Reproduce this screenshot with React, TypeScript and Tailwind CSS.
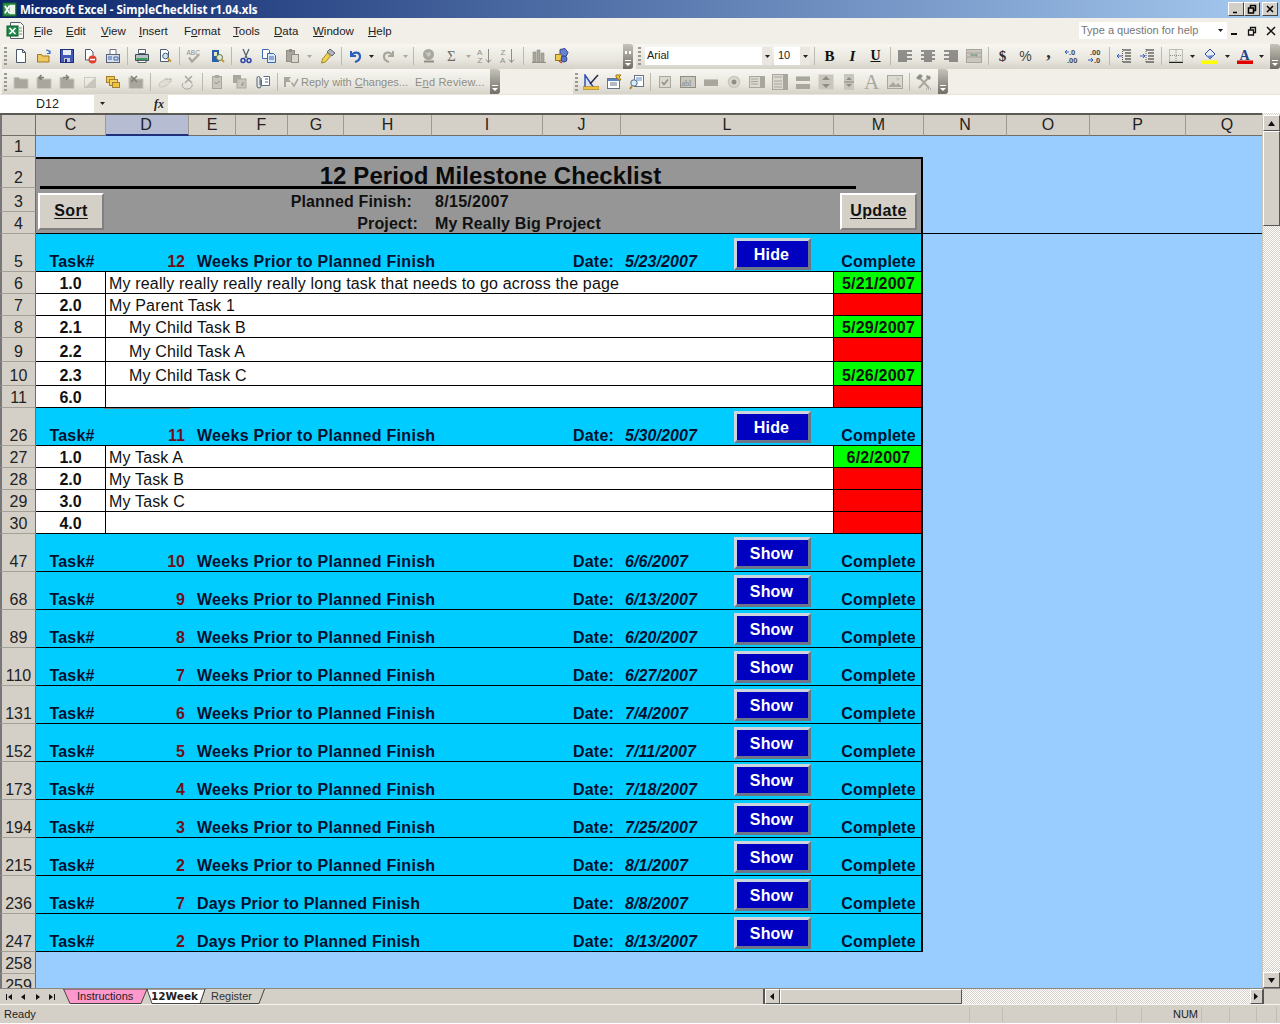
import React from 'react';

const ui = "font-['Liberation_Sans',sans-serif]";

const S = ({ children }: { children: React.ReactNode }) => (
  <svg width="16" height="16" viewBox="0 0 16 16" fill="none">{children}</svg>
);

const G = '#a9a79d';
const GD = '#8f8d84';
const GL = '#c9c7bd';

const icons: Record<string, React.ReactNode> = {
  new: <S><path d="M3.500 1.500h6l3 3v10h-9z" fill="#fff" stroke="#4a5870" /><path d="M9.500 1.500v3h3" stroke="#4a5870" /></S>,
  open: <S><path d="M1.500 6.500h4l1 1.500h6.500v6h-11.500z" fill="#f0c860" stroke="#a07820" /><path d="M10 2c2 0 3.500 1 4 3M14 2.500v3h-3" stroke="#3f6fc4" strokeWidth="1.200" /></S>,
  save: <S><rect x="1.500" y="1.500" width="13" height="13" fill="#4058b8" stroke="#1c2c78" /><rect x="4" y="2" width="8" height="5" fill="#e8ecf8" /><rect x="5" y="10" width="6" height="4" fill="#c8ccd8" /><rect x="6" y="11" width="2" height="3" fill="#1c2c78" /></S>,
  perm: <S><path d="M3.500 1.500h5l2.500 2.500v8h-7.500z" fill="#fff" stroke="#4a5870" /><circle cx="10.500" cy="11.500" r="4" fill="#e04030" /><rect x="8" y="10.800" width="5" height="1.500" fill="#fff" /></S>,
  mail: <S><path d="M5 1.500h6v5h-6z" fill="#fff" stroke="#6a7484" /><rect x="1.500" y="6.500" width="13" height="8" fill="#d8dce4" stroke="#56627a" /><path d="M3 9h4M3 11h4M9 9h4v3h-4z" stroke="#3a6ab0" /></S>,
  print: <S><path d="M4.500 1.500h7v4h-7z" fill="#fff" stroke="#55606e" /><path d="M1.500 6.500h13v6h-13z" fill="#b8c0c8" stroke="#3e4a56" /><rect x="2.500" y="10" width="11" height="2" fill="#3aa060" /><path d="M4 12.500h8v2h-8z" fill="#fff" stroke="#55606e" /></S>,
  preview: <S><path d="M3.500 1.500h6l2 2v10h-8z" fill="#fff" stroke="#4a5870" /><circle cx="8.500" cy="8" r="2.800" fill="#cfe4f4" stroke="#40607a" /><path d="M10.500 10l3.500 3.500" stroke="#c89838" strokeWidth="2" /></S>,
  spell: <S><text x="0.500" y="6.500" fontSize="6.500" fontFamily="Liberation Sans" fill={GD}>ABC</text><path d="M3 9.500l3 4 7-7" stroke={G} strokeWidth="2.200" /></S>,
  research: <S><rect x="3" y="2" width="7" height="12" fill="#2a60a8" /><rect x="5" y="4" width="3" height="4" fill="#e4e8c0" /><circle cx="10.500" cy="9.500" r="3" fill="#e0e8d8" stroke="#607040" /><path d="M12.500 11.500l2.500 2.500" stroke="#c89838" strokeWidth="2" /></S>,
  cut: <S><path d="M5 1l4 9M11 1l-4 9" stroke="#5a6270" strokeWidth="1.300" /><circle cx="5" cy="12.500" r="2" stroke="#2a44a8" strokeWidth="1.500" /><circle cx="11" cy="12.500" r="2" stroke="#2a44a8" strokeWidth="1.500" /></S>,
  copy: <S><path d="M1.500 1.500h6l1 1v8h-7z" fill="#fff" stroke="#3a68b0" /><path d="M6.500 5.500h6l2 2v7h-8z" fill="#dbe8f8" stroke="#3a68b0" /><path d="M8 9h5M8 11h5" stroke="#3a68b0" /></S>,
  paste: <S><rect x="2.500" y="2.500" width="8" height="11" fill={G} stroke={GD} /><rect x="5" y="1" width="3" height="3" fill={GD} /><rect x="7.500" y="6.500" width="7" height="8" fill="#d8d6cc" stroke={GD} /></S>,
  painter: <S><path d="M10 1l5 4-3 3-5-4z" fill="#b0b4c0" stroke="#5c6472" /><path d="M7.500 5l3 3-5 6-4 1 1-4z" fill="#f0d050" stroke="#a08828" /></S>,
  undo: <S><path d="M4 3v5h5" stroke="#2a5fc0" strokeWidth="2" /><path d="M4.500 7.500C7 3 13 4 13 8.500c0 2.500-2 4.500-5 5.500" stroke="#2a5fc0" strokeWidth="2.200" /></S>,
  redo: <S><path d="M12 3v5H7" stroke={G} strokeWidth="2" /><path d="M11.500 7.500C9 3 3 4 3 8.500c0 2.500 2 4.500 5 5.500" stroke={G} strokeWidth="2.200" /></S>,
  link: <S><circle cx="7.500" cy="6.500" r="5.500" fill={G} /><path d="M4 4l3 1 2-2 1 4-3 2z" fill={GL} /><path d="M3 13.500h10" stroke={GD} strokeWidth="2" /></S>,
  sigma: <S><text x="3" y="13" fontSize="15" fontFamily="Liberation Serif" fill="#6e6c66">Σ</text></S>,
  az: <S><text x="0" y="7" fontSize="8" fontFamily="Liberation Sans" fill={GD}>A</text><text x="0.500" y="15" fontSize="8" fontFamily="Liberation Sans" fill={GD}>Z</text><path d="M11.500 1v13M9 11.500l2.500 3 2.500-3" stroke={GD} /></S>,
  za: <S><text x="0.500" y="7" fontSize="8" fontFamily="Liberation Sans" fill={GD}>Z</text><text x="0" y="15" fontSize="8" fontFamily="Liberation Sans" fill={GD}>A</text><path d="M11.500 1v13M9 11.500l2.500 3 2.500-3" stroke={GD} /></S>,
  chart: <S><path d="M2 4h3v10H2zM6 2h3v12H6zM10 5h3v9h-3z" fill={G} stroke={GD} strokeWidth="0.600" /><path d="M1 14.500h14" stroke={GD} /></S>,
  drawing: <S><path d="M6 1.500l5-1 3 4-2 4-6-1z" fill="#6a82d0" stroke="#33488c" /><rect x="1.500" y="6.500" width="6" height="6" fill="#f0c850" stroke="#987820" /><circle cx="10" cy="11" r="3" fill="#5a78c8" stroke="#33488c" /><path d="M5 13l3 2" stroke="#c04030" strokeWidth="1.500" /></S>,
  f1: <S><path d="M1 3.500h5l1 1.500h8v9.500H1z" fill={G} stroke={GL} /></S>,
  f2: <S><path d="M1 3.500h5l1 1.500h8v9.500H1z" fill={G} stroke={GL} /><path d="M8 3.500H3.500M5.500 1L3 3.500 5.500 6" stroke="#7f7d74" strokeWidth="1.500" /></S>,
  f3: <S><path d="M1 3.500h5l1 1.500h8v9.500H1z" fill={G} stroke={GL} /><path d="M4 3.500h5M7 1l2.500 2.500L7 6" stroke="#7f7d74" strokeWidth="1.500" /></S>,
  f4: <S><rect x="2.500" y="3.500" width="11" height="10" stroke={G} strokeDasharray="1 1" /><path d="M3 13l10-9v9z" fill={GL} /></S>,
  f5: <S><rect x="1.500" y="2.500" width="8" height="6" fill="#f0c850" stroke="#a08030" /><rect x="4.500" y="5.500" width="8" height="6" fill="#f4d060" stroke="#a08030" /><rect x="7.500" y="8.500" width="7" height="5" fill="#f0c040" stroke="#a08030" /></S>,
  f6: <S><path d="M1 3.500h5l1 1.500h8v9.500H1z" fill={G} stroke={GL} /><path d="M3 2l6 6M9 2L3 8" stroke="#7f7d74" strokeWidth="1.500" /></S>,
  f7: <S><path d="M2 11c0-3 6-6 9-6l3 0c0 3-4 8-9 8-2 0-3 0-3-2z" stroke={GL} fill="#e0ded4" /><path d="M8 5h6v3" stroke={G} strokeDasharray="1 1" /></S>,
  f8: <S><path d="M5 2l7 7M12 2L5 9" stroke={G} strokeWidth="1.500" /><path d="M3 9a5 4 0 1 0 9 1" stroke={G} /></S>,
  f9: <S><rect x="3.500" y="2.500" width="9" height="12" fill={GL} stroke={G} /><rect x="6" y="1" width="4" height="3" fill={G} /><path d="M5.500 8l2 2 3-3" stroke={GD} /></S>,
  f10: <S><rect x="1" y="1" width="8" height="8" fill={G} /><rect x="5" y="5" width="9" height="9" fill={GL} stroke={G} /><path d="M11 8v3l-2 0" stroke={GD} /></S>,
  clip: <S><path d="M8.500 2.500h6v9h-8V6" fill="#fff" stroke="#5c6c84" /><path d="M10 5h3M10 8h3" stroke="#3a68b0" /><path d="M6 4v8a2 2 0 0 1-4 0V4a1.500 1.500 0 0 1 3 0v7" stroke="#52627a" /></S>,
  flag: <S><path d="M1 3h7L6 5.500 8 8H3v5H1z" fill={G} /><path d="M8.500 8.500l2.500 3.500 4-7" stroke={G} strokeWidth="1.600" /></S>,
  design: <S><path d="M2 1v13h9z" fill="#dbe4f6" stroke="#2a48b0" strokeWidth="1.400" /><path d="M15 1L7 10" stroke="#2a2a50" strokeWidth="1.500" /><path d="M0 12.500h16v3H0z" fill="#f0c040" stroke="#a07810" strokeWidth="0.600" /></S>,
  props: <S><rect x="1.500" y="4.500" width="12" height="10" fill="#fff" stroke="#6a7484" /><rect x="2" y="5" width="11" height="2" fill="#5a84c8" /><path d="M4 9h7M4 11h7" stroke="#6a7484" /><path d="M10 1l5 0-2 2 2 3-2 0-3-3z" fill="#f0c840" stroke="#a07810" /></S>,
  code: <S><rect x="5.500" y="1.500" width="9" height="11" fill="#fff" stroke="#6a7484" /><path d="M7 4h6M7 6h6" stroke="#5a84c8" /><circle cx="5" cy="9" r="3.200" fill="#d8ecf8" stroke="#4a6a88" /><path d="M3 12l-2 3" stroke="#b08830" strokeWidth="2" /></S>,
  check: <S><rect x="2.500" y="2.500" width="11" height="11" fill="#dcdad0" stroke={G} /><path d="M5 8l2 2.500 4-5" stroke={GD} strokeWidth="1.500" /></S>,
  abl: <S><rect x="0.500" y="2.500" width="15" height="11" fill={GL} stroke={GD} /><text x="1.500" y="11.500" fontSize="8" fontFamily="Liberation Serif" fill="#86847b">abl</text></S>,
  rect: <S><rect x="1" y="5" width="14" height="7" fill={G} /><rect x="1" y="5" width="14" height="1" fill={GL} /></S>,
  radio: <S><circle cx="8" cy="8" r="5.500" fill="#dcdad0" stroke={GL} strokeWidth="1.500" /><circle cx="8" cy="8" r="2.500" fill={GD} /></S>,
  list: <S><rect x="0.500" y="2.500" width="15" height="11" fill="#dcdad0" stroke={G} /><path d="M2 5h7M2 7.500h7M2 10h7" stroke={G} /><rect x="11" y="3" width="4" height="10" fill={G} /></S>,
  combo: <S><rect x="0.500" y="0.500" width="15" height="15" fill="#dcdad0" stroke={G} /><path d="M2 3h8M2 7h8M2 10h8M2 13h8" stroke={G} /><rect x="11" y="1" width="4" height="14" fill={G} /></S>,
  scroll: <S><rect x="1" y="2" width="14" height="5" fill={G} /><rect x="1" y="10" width="14" height="5" fill={G} /><rect x="1" y="2" width="14" height="1" fill={GL} /></S>,
  spin: <S><rect x="0.500" y="0.500" width="15" height="15" fill={GL} /><path d="M4 6l4-4 4 4zM4 10l4 4 4-4z" fill={GD} /></S>,
  spin2: <S><rect x="3" y="0" width="10" height="16" fill={GL} /><path d="M5 6l3-3 3 3zM5 10l3 3 3-3z" fill={GD} /><rect x="3" y="7" width="10" height="2" fill={G} /></S>,
  bigA: <span className="font-['Liberation_Serif',serif] text-[21px] leading-[16px] text-[#a9a79d]">A</span>,
  img: <S><rect x="0.500" y="1.500" width="15" height="13" fill="#dcdad0" stroke={G} /><path d="M1 13l5-5 3 3 2-2 4 4z" fill={G} /><circle cx="11" cy="5" r="1.500" fill={GL} /></S>,
  tools: <S><path d="M2 2l11 12M14 2L3 14" stroke={G} strokeWidth="2" /><path d="M0 4l4-4 3 2-4 4zM11 1l4 3-2 2-3-3z" fill={GD} /><path d="M10 15h1M12 15h1M14 15h1" stroke={GD} /></S>,
  bold: <span className="font-['Liberation_Serif',serif] font-bold text-[15px] leading-4 text-[#111]">B</span>,
  italic: <span className="font-['Liberation_Serif',serif] italic font-bold text-[15px] leading-4 text-[#111]">I</span>,
  under: <span className="font-['Liberation_Serif',serif] font-bold underline text-[14px] leading-4 text-[#111]">U</span>,
  al: <S><path d="M1 3h14M1 5h9M1 7h14M1 9h9M1 11h14M1 13h9" stroke="#333" /></S>,
  ac: <S><path d="M1 3h14M4 5h8M1 7h14M4 9h8M1 11h14M4 13h8" stroke="#333" /></S>,
  ar: <S><path d="M1 3h14M6 5h9M1 7h14M6 9h9M1 11h14M6 13h9" stroke="#333" /></S>,
  merge: <S><rect x="0.500" y="1.500" width="15" height="13" fill={GL} stroke={G} /><path d="M0 5h16M5 5v4M11 5v4M0 9h16" stroke={G} /><path d="M5 7h6" stroke="#5a8a6a" /></S>,
  dollar: <span className="font-['Liberation_Serif',serif] font-bold text-[15px] leading-4 text-[#333]">$</span>,
  pct: <span className="font-['Liberation_Sans',sans-serif] text-[14px] leading-4 text-[#444]">%</span>,
  comma: <span className="font-['Liberation_Serif',serif] font-bold text-[18px] leading-3 text-[#333] pb-2">,</span>,
  inc: <S><text x="5" y="7" fontSize="7.500" fontWeight="bold" fontFamily="Liberation Sans" fill="#444">.0</text><text x="3" y="15" fontSize="7.500" fontWeight="bold" fontFamily="Liberation Sans" fill="#444">.00</text><path d="M5 4H1M3 2L1 4l2 2" stroke="#2a5fc0" /></S>,
  dec: <S><text x="3" y="7" fontSize="7.500" fontWeight="bold" fontFamily="Liberation Sans" fill="#444">.00</text><text x="7" y="15" fontSize="7.500" fontWeight="bold" fontFamily="Liberation Sans" fill="#444">.0</text><path d="M1 12h5M4 10l2 2-2 2" stroke="#2a5fc0" /></S>,
  outd: <S><path d="M7 2h8M9 5h6M9 8h6M9 11h6M7 14h8" stroke="#222" /><path d="M6 8H1M3 6L1 8l2 2" stroke="#2a5fc0" /><path d="M6.500 1v14" stroke="#555" strokeDasharray="1 1" /></S>,
  ind: <S><path d="M7 2h8M9 5h6M9 8h6M9 11h6M7 14h8" stroke="#222" /><path d="M1 8h5M4 6l2 2-2 2" stroke="#2a5fc0" /><path d="M7 1v14" stroke="#555" strokeDasharray="1 1" /></S>,
  borders: <S><rect x="1.500" y="1.500" width="13" height="12" stroke="#8a8a84" strokeDasharray="1 1" /><path d="M8 2v11M2 7.500h12" stroke="#8a8a84" strokeDasharray="1 1" /><path d="M1 14.500h14" stroke="#222" /></S>,
  fill: <S><path d="M8 1l5 5-5 5-5-5z" fill="#e8ecf4" stroke="#2c4a9a" /><path d="M4 8l4 3 4-4z" fill="#6a88d0" /><rect x="0" y="12.500" width="16" height="3.500" fill="#ffff00" /></S>,
  color: <S><text x="2.500" y="11.500" fontSize="14" fontWeight="bold" fontFamily="Liberation Serif" fill="#23408c">A</text><rect x="0" y="12.500" width="16" height="3.500" fill="#e00000" /></S>,
};

const Slot = ({ name }: { name: string }) => (
  <div className="w-[23px] h-[22px] shrink-0 flex items-center justify-center">{icons[name]}</div>
);

const Sep = ({ w }: { w: string }) => (
  <div className={`${w} shrink-0 flex justify-center`}>
    <div className="w-px h-[18px] bg-[#bcb9ae]" />
  </div>
);

const Arrow = ({ w, dim }: { w: string; dim?: boolean }) => (
  <div className={`${w} shrink-0 flex items-center justify-center`}>
    <svg width="5" height="3" viewBox="0 0 5 3"><path d="M0 0h5L2.500 3z" fill={dim ? '#a9a79d' : '#222'} /></svg>
  </div>
);

const Grip = () => (
  <div className="w-[3px] h-[18px] mx-[2px] shrink-0 bg-[repeating-linear-gradient(#9a988f_0_2px,transparent_2px_4px)]" />
);

const Chevron = ({ double }: { double?: boolean }) => (
  <div className="w-[10px] h-[25px] shrink-0 rounded-r-[3px] bg-[linear-gradient(#c6c4ba,#6f6d65)] flex flex-col items-center justify-end pb-[3px] gap-[3px]">
    {double && <span className="w-[6px] h-[3px] bg-[repeating-linear-gradient(90deg,#fff_0_2px,transparent_2px_4px)] mb-[3px]" />}
    <svg width="6" height="6" viewBox="0 0 6 6"><path d="M0 0h6v1H0zM0 3h6L3 6z" fill="#fff" /></svg>
  </div>
);

const Toolbar = ({ className, children }: { className: string; children: React.ReactNode }) => (
  <div className={`${className} h-[25px] flex items-center rounded-r-[3px] bg-[linear-gradient(#f7f6f1,#e9e7df_60%,#d6d4c9)] shrink-0`}>
    {children}
  </div>
);

const slots = (names: string[]) => names.map((n) => <Slot key={n} name={n} />);

const Dropdown = ({ w, text, pad }: { w: string; text: string; pad: string }) => (
  <div className={`${w} h-[18px] bg-white flex items-center shrink-0 ${pad} text-[11px] text-[#222]`}>
    <span className="flex-1 pb-[2px]">{text}</span>
    <div className="w-[10px] h-[18px] bg-[#e9e7df] flex items-center justify-center">
      <svg width="5" height="3" viewBox="0 0 5 3"><path d="M0 0h5L2.500 3z" fill="#222" /></svg>
    </div>
  </div>
);

const columns = [
  { l: 'C', w: 'w-[70px]' }, { l: 'D', w: 'w-[83px] pr-[2px]' }, { l: 'E', w: 'w-[47px]' }, { l: 'F', w: 'w-[52px]' },
  { l: 'G', w: 'w-[56px] pl-[1px]' }, { l: 'H', w: 'w-[88px]' }, { l: 'I', w: 'w-[111px]' }, { l: 'J', w: 'w-[78px]' },
  { l: 'L', w: 'w-[213px]' }, { l: 'M', w: 'w-[90px]' }, { l: 'N', w: 'w-[83px]' }, { l: 'O', w: 'w-[83px]' },
  { l: 'P', w: 'w-[96px]' }, { l: 'Q', w: 'w-[83px]' },
];

const RowNum = ({ n }: { n: number }) => (
  <div className="w-[36px] shrink-0 bg-[#d4d0c8] border-l-2 border-l-[#777] border-b border-b-[#a3a097] border-r border-r-[#6f6d66] flex justify-center items-end text-[16px] leading-[18px] text-[#222]">
    {n}
  </div>
);

const tasks1 = [
  { row: 6, h: 'h-[22px]', id: '1.0', text: 'My really really really really long task that needs to go across the page', indent: false, done: '5/21/2007' },
  { row: 7, h: 'h-[22px]', id: '2.0', text: 'My Parent Task 1', indent: false, done: '' },
  { row: 8, h: 'h-[22px]', id: '2.1', text: 'My Child Task B', indent: true, done: '5/29/2007' },
  { row: 9, h: 'h-[24px]', id: '2.2', text: 'My Child Task A', indent: true, done: '' },
  { row: 10, h: 'h-[24px]', id: '2.3', text: 'My Child Task C', indent: true, done: '5/26/2007' },
  { row: 11, h: 'h-[22px]', id: '6.0', text: '', indent: false, done: '' },
];

const tasks2 = [
  { row: 27, h: 'h-[22px]', id: '1.0', text: 'My Task A', indent: false, done: '6/2/2007' },
  { row: 28, h: 'h-[22px]', id: '2.0', text: 'My Task B', indent: false, done: '' },
  { row: 29, h: 'h-[22px]', id: '3.0', text: 'My Task C', indent: false, done: '' },
  { row: 30, h: 'h-[22px]', id: '4.0', text: '', indent: false, done: '' },
];

type Task = (typeof tasks1)[number];

const TaskRow = ({ t }: { t: Task }) => (
  <div className={`flex ${t.h}`}>
    <RowNum n={t.row} />
    <div className="w-[887px] shrink-0 flex bg-white border-b border-black border-r-2 border-r-black text-[16px] leading-[18px] text-[#111] relative">
      <div className="w-[70px] shrink-0 border-r border-black flex items-end justify-center font-bold">{t.id}</div>
      <div className={`w-[727px] shrink-0 flex items-end tracking-[0.165px] ${t.indent ? 'pl-[23px]' : 'pl-[3px]'}`}>{t.text}</div>
      <div className={`flex-1 flex items-end justify-center font-bold tracking-[0.2px] pl-[2px] border-l border-black ${t.done ? 'bg-[#00ff00]' : 'bg-[#ff0000]'}`}>{t.done}</div>
      {t.row === 11 && <div className="absolute z-10 left-[68px] bottom-[-2px] w-[86px] h-px bg-[#777]" />}
    </div>
    <div className="flex-1 bg-[#99ccff]" />
  </div>
);

const BlueButton = ({ label, top }: { label: string; top: string }) => (
  <div className={`absolute left-[698px] ${top} w-[77px] h-[32px] bg-[#0000c0] border-[3px] border-t-[#ccd4dc] border-l-[#ccd4dc] border-r-[#6c7688] border-b-[#6c7688] flex items-center justify-center pt-[2px] pr-[2px] text-white font-bold text-[16px] tracking-[0.2px]`}>
    {label}
  </div>
);

const Section = ({ row, n, unit, date, label, top, h }: { row: number; n: number; unit: string; date: string; label: string; top: string; h: string }) => (
  <div className={`flex ${h}`}>
    <RowNum n={row} />
    <div className="w-[887px] shrink-0 relative bg-[#00ccff] border-b border-black border-r-2 border-r-black grid grid-cols-[70px_82px_385px_52px_208px_88px] items-end font-bold text-[16px] leading-[18px] tracking-[0.2px] text-[#001030]">
      <div className="text-center pl-[2px]">Task#</div>
      <div className="text-right pr-[3px] text-[#6b1018] tracking-normal">{n}</div>
      <div className={`pl-[9px] ${unit === 'Days' ? 'tracking-[0.19px]' : 'tracking-[0.29px]'}`}>{unit} Prior to Planned Finish</div>
      <div>Date:</div>
      <div className="italic tracking-[0.1px]">{date}</div>
      <div className="text-center pl-[3px]">Complete</div>
      <BlueButton label={label} top={top} />
    </div>
    <div className="flex-1 bg-[#99ccff]" />
  </div>
);

const shown = [
  { row: 47, n: 10, unit: 'Weeks', date: '6/6/2007', top: 'top-[3px]' },
  { row: 68, n: 9, unit: 'Weeks', date: '6/13/2007', top: 'top-[3px]' },
  { row: 89, n: 8, unit: 'Weeks', date: '6/20/2007', top: 'top-[3px]' },
  { row: 110, n: 7, unit: 'Weeks', date: '6/27/2007', top: 'top-[3px]' },
  { row: 131, n: 6, unit: 'Weeks', date: '7/4/2007', top: 'top-[3px]' },
  { row: 152, n: 5, unit: 'Weeks', date: '7/11/2007', top: 'top-[3px]' },
  { row: 173, n: 4, unit: 'Weeks', date: '7/18/2007', top: 'top-[2px]' },
  { row: 194, n: 3, unit: 'Weeks', date: '7/25/2007', top: 'top-[3px]' },
  { row: 215, n: 2, unit: 'Weeks', date: '8/1/2007', top: 'top-[3px]' },
  { row: 236, n: 7, unit: 'Days', date: '8/8/2007', top: 'top-[3px]' },
  { row: 247, n: 2, unit: 'Days', date: '8/13/2007', top: 'top-[3px]' },
];

const GreyButton = ({ label, className }: { label: string; className: string }) => (
  <div className={`absolute top-[-19px] h-[37px] pb-[2px] bg-[#d4d0c8] border-2 border-t-white border-l-white border-r-[#808080] border-b-[#808080] flex items-center justify-center font-bold text-[16px] tracking-[0.4px] underline underline-offset-2 text-[#111] ${className}`}>
    {label}
  </div>
);

const ScrollBtn = ({ d, className }: { d: string; className: string }) => (
  <div className={`shrink-0 bg-[#d4d0c8] border border-t-white border-l-white border-r-[#555] border-b-[#555] flex items-center justify-center ${className}`}>
    <svg width="9" height="9" viewBox="0 0 9 9"><path d={d} fill="#111" /></svg>
  </div>
);

const menus = [
  { u: 'F', r: 'ile', w: 'w-[32px]' }, { u: 'E', r: 'dit', w: 'w-[35px]' }, { u: 'V', r: 'iew', w: 'w-[38px]' },
  { u: 'I', r: 'nsert', w: 'w-[45px]' }, { u: 'F', r: 'ormat', w: 'w-[49px]', mid: true }, { u: 'T', r: 'ools', w: 'w-[41px]' },
  { u: 'D', r: 'ata', w: 'w-[39px]' }, { u: 'W', r: 'indow', w: 'w-[55px]' }, { u: 'H', r: 'elp', w: 'w-[40px]' },
];

const ExcelIcon = ({ size }: { size: number }) => (
  <svg width={size} height={size} viewBox="0 0 16 16">
    <rect x="1" y="1" width="14" height="14" fill="#2f8f4f" stroke="#0f5a2a" />
    <rect x="8" y="3" width="6" height="10" fill="#e8f4e8" />
    <path d="M3 4l5 8M8 4l-5 8" stroke="#fff" strokeWidth="1.800" />
  </svg>
);

const SheetIcon = () => (
  <svg width="19" height="19" viewBox="0 0 19 19">
    <path d="M4.500 1.500h10l3 3v13h-13z" fill="#f6f6f2" stroke="#56606a" />
    <rect x="1" y="5" width="11" height="10" fill="#1f8a4c" stroke="#0f5a2a" />
    <path d="M3.500 7l6 6M9.500 7l-6 6" stroke="#fff" strokeWidth="1.600" />
    <path d="M13 7h3M13 10h3M13 13h3" stroke="#5a9a70" />
  </svg>
);

const WinBtn = ({ d }: { d: string }) => (
  <div className="w-[16px] h-[14px] bg-[#d4d0c8] border border-t-white border-l-white border-r-[#444] border-b-[#444] flex items-center justify-center">
    <svg width="10" height="10" viewBox="0 0 10 10"><path d={d} fill="none" stroke="#000" strokeWidth="1.500" /></svg>
  </div>
);

export default function App() {
  return (
    <div className="w-[1280px] h-[1024px] overflow-hidden flex flex-col bg-[#d4d0c8] font-['Liberation_Sans',Arial,sans-serif]">
      {/* title bar */}
      <div className="h-[18px] shrink-0 flex items-center pl-[2px] pr-[2px] bg-[linear-gradient(90deg,#0a246a,#a6caf0)] font-['Noto_Sans',sans-serif]">
        <ExcelIcon size={15} />
        <span className="ml-[3px] flex-1 pt-px text-white font-bold text-[11.500px]">Microsoft Excel - SimpleChecklist r1.04.xls</span>
        <WinBtn d="M2 8.500h4" />
        <WinBtn d="M1.500 4h5v5h-5zM3.500 3.500v-2h5v5H7" />
        <div className="w-[2px]" />
        <WinBtn d="M2 2l6 6M8 2l-6 6" />
      </div>

      {/* menu bar */}
      <div className={`h-[25px] shrink-0 flex items-center bg-[#f1efe8] ${ui} text-[11.500px] text-[#222]`}>
        <div className="w-[34px] pl-[6px] shrink-0"><SheetIcon /></div>
        {menus.map((m) => (
          <div key={m.r} className={`${m.w} shrink-0 pt-[2px]`}>
            {m.mid ? <>F<span className="underline">o</span>rmat</> : <><span className="underline">{m.u}</span>{m.r}</>}
          </div>
        ))}
        <div className="flex-1" />
        <div className="w-[148px] h-[17px] bg-white flex items-center pl-[2px] text-[11px] text-[#777]">
          <span className="flex-1">Type a question for help</span>
          <Arrow w="w-[14px]" />
        </div>
        <div className="w-[4px]" />
        <svg width="8" height="8" viewBox="0 0 8 8"><path d="M0 7h6" stroke="#111" strokeWidth="2" /></svg>
        <svg className="ml-[8px]" width="10" height="10" viewBox="0 0 10 10"><path d="M1.500 4h5v5h-5zM3.500 3.500v-2h5v5H7" fill="none" stroke="#111" strokeWidth="1.300" /></svg>
        <svg className="ml-[9px] mr-[4px]" width="10" height="10" viewBox="0 0 10 10"><path d="M1 1l8 8M9 1L1 9" stroke="#111" strokeWidth="1.500" /></svg>
      </div>

      {/* toolbars */}
      <div className={`h-[26px] shrink-0 flex items-center bg-[#f1efe8] ${ui}`}>
        <Toolbar className="w-[631px] ml-[2px]">
          <div className="w-[7px] shrink-0"><Grip /></div>
          {slots(['new', 'open', 'save', 'perm', 'mail'])}
          <Sep w="w-[6px]" />
          {slots(['print', 'preview'])}
          <Sep w="w-[6px]" />
          {slots(['spell', 'research'])}
          <Sep w="w-[6px]" />
          {slots(['cut', 'copy', 'paste'])}
          <Arrow w="w-[13px]" dim />
          <Slot name="painter" />
          <Sep w="w-[4px]" />
          <Slot name="undo" />
          <Arrow w="w-[11px]" />
          <Slot name="redo" />
          <Arrow w="w-[10px]" dim />
          <Sep w="w-[7px]" />
          {slots(['link', 'sigma'])}
          <Arrow w="w-[10px]" dim />
          {slots(['az', 'za'])}
          <Sep w="w-[8px]" />
          {slots(['chart', 'drawing'])}
          <div className="flex-1" />
          <Chevron double />
        </Toolbar>
        <div className="w-[3px]" />
        <Toolbar className="w-[644px]">
          <div className="w-[9px] shrink-0"><Grip /></div>
          <Dropdown w="w-[127px]" text="Arial" pad="pl-[2px]" />
          <div className="w-[2px]" />
          <Dropdown w="w-[36px]" text="10" pad="pl-[4px]" />
          <Sep w="w-[8px]" />
          {slots(['bold', 'italic', 'under'])}
          <Sep w="w-[6px]" />
          {slots(['al', 'ac', 'ar', 'merge'])}
          <Sep w="w-[6px]" />
          {slots(['dollar', 'pct', 'comma', 'inc', 'dec'])}
          <Sep w="w-[6px]" />
          {slots(['outd', 'ind'])}
          <Sep w="w-[6px]" />
          <Slot name="borders" />
          <Arrow w="w-[11px]" />
          <Slot name="fill" />
          <Arrow w="w-[12px]" />
          <Slot name="color" />
          <Arrow w="w-[10px]" />
          <div className="flex-1" />
          <Chevron />
        </Toolbar>
      </div>
      <div className={`h-[25px] shrink-0 flex items-center bg-[#f1efe8] ${ui}`}>
        <Toolbar className="w-[498px] ml-[2px]">
          <div className="w-[7px] shrink-0"><Grip /></div>
          {slots(['f1', 'f2', 'f3', 'f4', 'f5', 'f6'])}
          <Sep w="w-[6px]" />
          {slots(['f7', 'f8'])}
          <Sep w="w-[6px]" />
          {slots(['f9', 'f10', 'clip'])}
          <Sep w="w-[6px]" />
          <div className="w-[21px] shrink-0 flex justify-center">{icons.flag}</div>
          <span className="w-[114px] shrink-0 whitespace-nowrap pt-px text-[11px] text-[#8f8d84]">Reply with <span className="underline">C</span>hanges...</span>
          <span className="whitespace-nowrap pt-px text-[11px] tracking-[0.2px] text-[#8f8d84]">E<span className="underline">n</span>d Review...</span>
          <div className="flex-1" />
          <Chevron />
        </Toolbar>
        <div className="w-[73px]" />
        <Toolbar className="w-[375px]">
          <div className="w-[6px] shrink-0"><Grip /></div>
          {slots(['design', 'props', 'code'])}
          <Sep w="w-[5px]" />
          {slots(['check', 'abl', 'rect', 'radio', 'list', 'combo', 'scroll', 'spin', 'spin2', 'bigA', 'img'])}
          <Sep w="w-[6px]" />
          <Slot name="tools" />
          <div className="flex-1" />
          <Chevron />
        </Toolbar>
      </div>

      {/* formula bar */}
      <div className="h-[19px] shrink-0 flex items-center bg-[#e6e4da] text-[12.500px] text-[#222]">
        <div className="w-[94px] h-[18px] bg-white pl-[36px] leading-[18px]">D12</div>
        <Arrow w="w-[16px]" />
        <div className="w-[58px] text-center pl-[40px] font-['Liberation_Serif',serif] italic font-bold text-[12px]">fx</div>
        <div className="flex-1 h-[18px] bg-white" />
      </div>

      {/* sheet */}
      <div className="flex-1 min-h-0 flex bg-[#d4d0c8]">
        <div className="flex-1 min-w-0 overflow-hidden border-r border-[#c8c5bb]">
          <div className="h-[23px] flex border-t-2 border-[#5c5a55]">
            <div className="w-[36px] shrink-0 border-l-2 border-l-[#777] border-r border-r-[#6f6d66] border-b border-b-[#6f6d66]" />
            {columns.map((c) => (
              <div key={c.l} className={`${c.w} shrink-0 border-r border-r-[#9d9a91] border-b border-b-[#6f6d66] flex items-center justify-center text-[16px] text-[#222] ${c.l === 'D' ? 'bg-[#b6bdd2] border-b-2 border-b-[#20307a]' : ''}`}>
                {c.l}
              </div>
            ))}
          </div>

          <div className="flex h-[21px]">
            <RowNum n={1} />
            <div className="flex-1 bg-[#99ccff]" />
          </div>

          {/* heading block */}
          <div className="flex h-[31px]">
            <RowNum n={2} />
            <div className="w-[887px] shrink-0 bg-[#969696] border-t-2 border-black border-r-2 border-r-black relative flex justify-center pt-[3px] pl-[24px]">
              <span className="font-bold text-[24px] leading-[28px] tracking-[0.1px] text-[#0a0a0a]">12 Period Milestone Checklist</span>
              <div className="absolute left-[4px] bottom-[-1px] w-[816px] h-[3px] bg-black" />
            </div>
            <div className="flex-1 bg-[#99ccff]" />
          </div>
          <div className="flex h-[24px]">
            <RowNum n={3} />
            <div className="w-[887px] shrink-0 bg-[#969696] border-r-2 border-r-black flex items-end font-bold text-[16px] leading-[18px] pb-px tracking-[0.15px] text-[#111]">
              <div className="w-[376px] text-right">Planned Finish:</div>
              <div className="pl-[23px] tracking-[0.3px]">8/15/2007</div>
            </div>
            <div className="flex-1 bg-[#99ccff]" />
          </div>
          <div className="flex h-[22px] relative">
            <RowNum n={4} />
            <div className="w-[887px] shrink-0 relative bg-[#969696] border-b border-black border-r-2 border-r-black flex items-end font-bold text-[16px] leading-[18px] tracking-[0.15px] text-[#111]">
              <div className="w-[382px] text-right">Project:</div>
              <div className="pl-[17px]">My Really Big Project</div>
              <GreyButton label="Sort" className="left-[2px] w-[66px]" />
              <GreyButton label="Update" className="left-[804px] w-[77px]" />
            </div>
            <div className="flex-1 bg-[#99ccff] border-b border-black" />
          </div>

          <Section row={5} n={12} unit="Weeks" date="5/23/2007" label="Hide" top="top-[4px]" h="h-[38px]" />
          {tasks1.map((t) => <TaskRow key={t.row} t={t} />)}
          <Section row={26} n={11} unit="Weeks" date="5/30/2007" label="Hide" top="top-[3px]" h="h-[38px]" />
          {tasks2.map((t) => <TaskRow key={t.row} t={t} />)}
          {shown.map((s) => <Section key={s.row} row={s.row} n={s.n} unit={s.unit} date={s.date} label="Show" top={s.top} h="h-[38px]" />)}

          <div className="flex h-[22px]">
            <RowNum n={258} />
            <div className="flex-1 bg-[#99ccff]" />
          </div>
          <div className="flex h-[22px]">
            <RowNum n={259} />
            <div className="flex-1 bg-[#99ccff]" />
          </div>
        </div>

        {/* vertical scrollbar */}
        <div className="w-[17px] shrink-0 flex flex-col bg-[repeating-conic-gradient(#d4d0c8_0_25%,#fff_0_50%)] bg-[length:2px_2px] pt-[2px]">
          <ScrollBtn d="M4.500 2L8 7H1z" className="h-[16px]" />
          <div className="h-[95px] shrink-0 bg-[#d4d0c8] border border-t-white border-l-white border-r-[#555] border-b-[#555]" />
          <div className="flex-1" />
          <ScrollBtn d="M1 2h7L4.500 7z" className="h-[16px]" />
        </div>
      </div>

      {/* tabs */}
      <div className="h-[16px] shrink-0 flex bg-[#d4d0c8] border-t border-[#8a8880]">
        <div className="w-[63px] shrink-0 flex items-center justify-around pl-[2px] pr-[4px]">
          {['M1 1h1v6H1zM7 1v6L3 4z', 'M6 1v6L2 4z', 'M2 1v6l4-3z', 'M1 1v6l4-3zM6 1h1v6H6z'].map((d) => (
            <svg key={d} width="8" height="8" viewBox="0 0 8 8"><path d={d} fill="#111" /></svg>
          ))}
        </div>
        <div className={`w-[202px] shrink-0 relative ${ui} text-[11px] leading-[14px] text-[#222] flex`}>
          <svg className="absolute left-0 top-0" width="202" height="15" viewBox="0 0 202 15">
            <path d="M0.500 0L7 14.500H78L84 0z" fill="#ff99cc" stroke="#444" />
            <path d="M142 0l-5 14.500H196L201.500 0" fill="#d4d0c8" stroke="#444" />
            <path d="M84 0L89 14.500H137L142 0z" fill="#fff" stroke="#444" />
          </svg>
          <span className="relative w-[85px] pl-[14px] whitespace-nowrap">Instructions</span>
          <span className="relative w-[62px] pl-[3px] font-['DejaVu_Sans',sans-serif] font-bold text-[10.500px]">12Week</span>
          <span className="relative text-[#333] pl-[1px]">Register</span>
        </div>
        <div className="w-[498px] shrink-0" />
        <div className="w-[2px] shrink-0 bg-[#555]" />
        <ScrollBtn d="M6 1v7L2 4.500z" className="w-[15px]" />
        <div className="w-[182px] shrink-0 bg-[#d4d0c8] border border-t-white border-l-white border-r-[#555] border-b-[#555]" />
        <div className="w-[288px] shrink-0 bg-[repeating-conic-gradient(#d4d0c8_0_25%,#fff_0_50%)] bg-[length:2px_2px]" />
        <ScrollBtn d="M2 1v7l4-3.500z" className="w-[13px]" />
        <div className="flex-1 border-l border-[#555]" />
      </div>

      {/* status bar */}
      <div className={`h-[20px] shrink-0 flex items-center border-t border-t-[#f4f3ee] border-b border-b-white bg-[#d4d0c8] ${ui} text-[11px] text-[#222] pt-px`}>
        <span className="w-[969px] pl-[4px]">Ready</span>
        <div className="w-[34px] h-[15px] border-x border-[#c0bdb4]" />
        <div className="w-[114px] h-[15px] border-r border-[#c0bdb4]" />
        <div className="w-[25px] h-[15px] border-r border-[#c0bdb4]" />
        <div className="w-[60px] h-[15px] border-r border-[#c0bdb4] text-right pr-[3px] leading-[15px]">NUM</div>
        <div className="w-[28px] h-[15px] border-r border-[#c0bdb4]" />
        <div className="w-[27px] h-[15px] border-r border-[#c0bdb4]" />
        <div className="w-[20px] h-[15px] border-r border-[#c0bdb4]" />
      </div>
    </div>
  );
}
